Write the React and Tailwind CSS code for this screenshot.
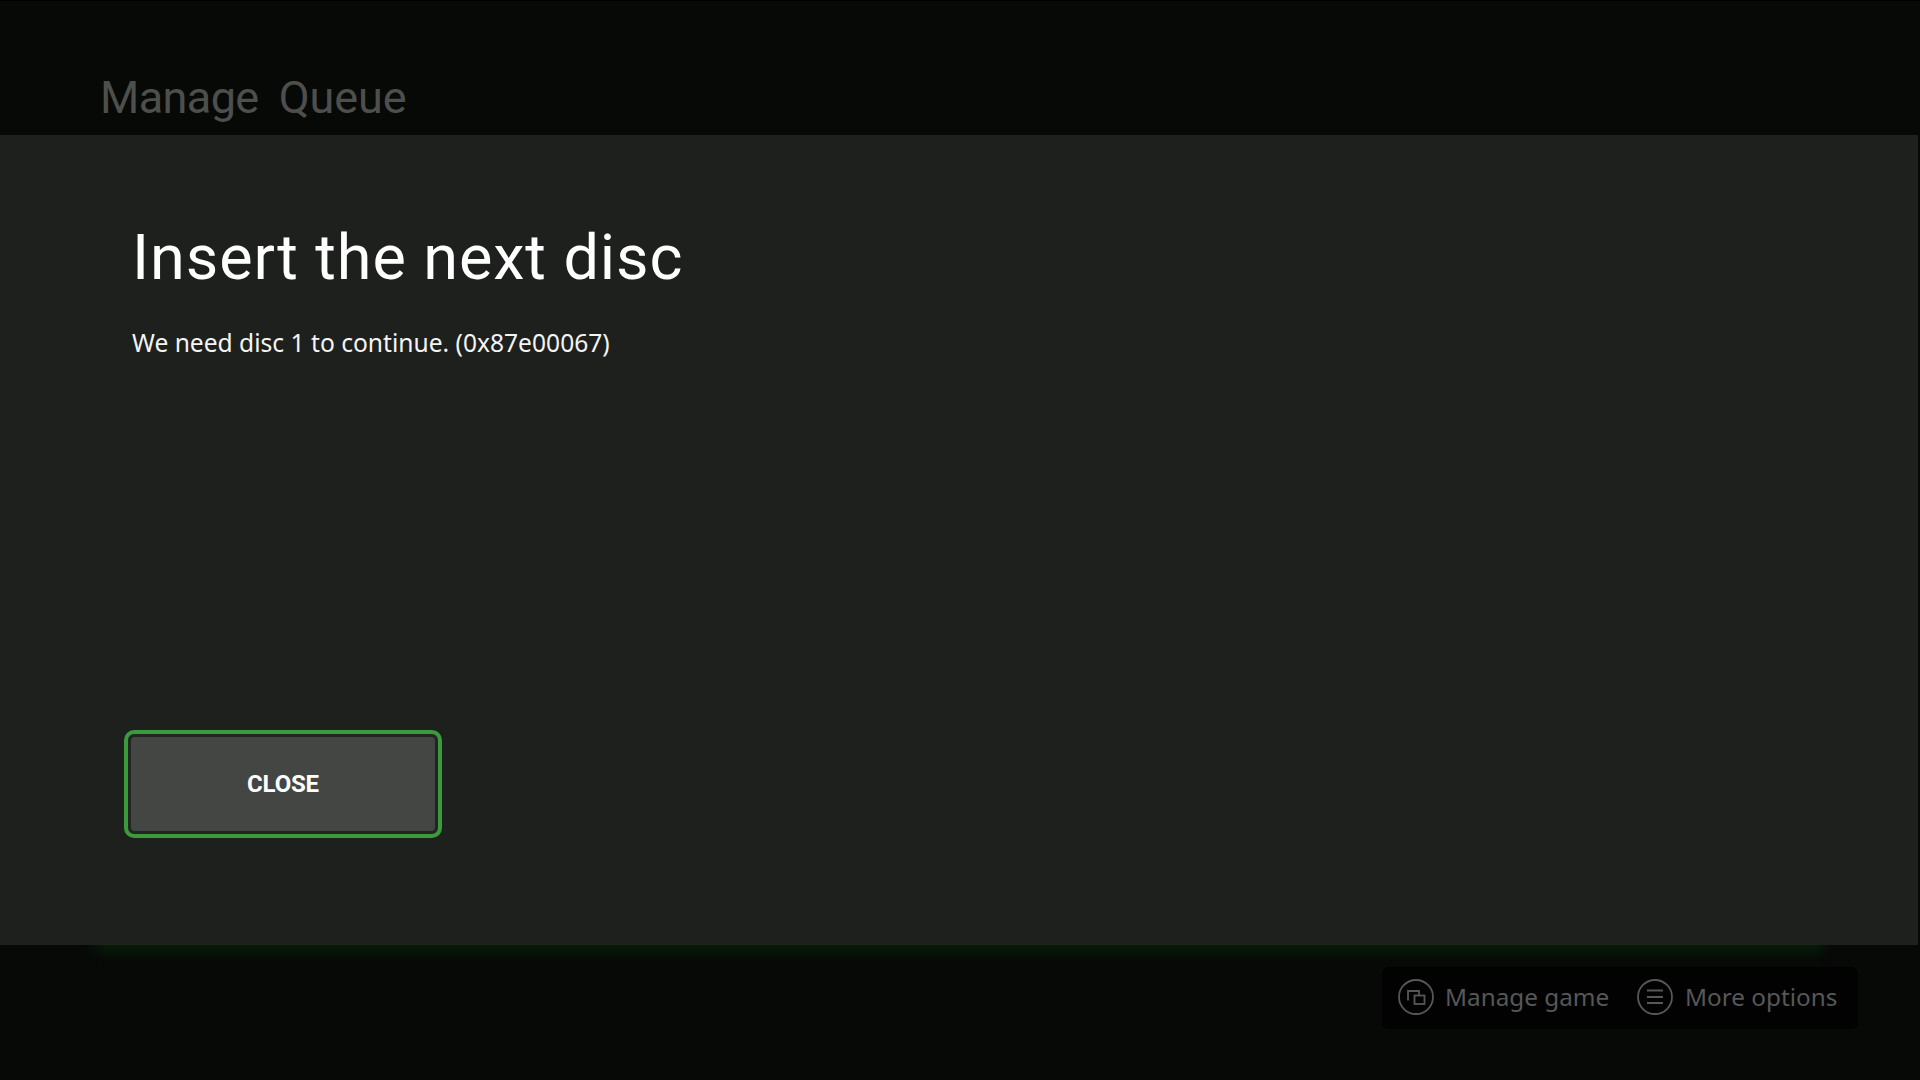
import React from 'react';

function ManageIcon() {
  return (
    <svg width="36" height="36" viewBox="0 0 36 36" fill="none" stroke="#565856" strokeWidth="1.8" className="shrink-0">
      <circle cx="18" cy="18" r="17" />
      <path d="M10 21.5V12h11v4" />
      <rect x="16.5" y="16.5" width="10" height="8.5" />
    </svg>
  );
}

function MenuIcon() {
  return (
    <svg width="36" height="36" viewBox="0 0 36 36" fill="none" stroke="#565856" strokeWidth="1.8" className="shrink-0">
      <circle cx="18" cy="18" r="17" />
      <path d="M10 11.5h16M10 18h16M10 24h16" strokeWidth="2.2" />
    </svg>
  );
}

export default function App() {
  return (
    <div className="h-screen w-full overflow-hidden flex flex-col bg-[#070907] font-['Noto_Sans',sans-serif]">
      {/* Header */}
      <div className="h-[135px] shrink-0 border-t border-black pl-[100px] pt-[69px]">
        <div className="flex gap-[20px] font-['Roboto',sans-serif] text-[45px] leading-[56px] text-[#4d4f4d]">
          <span className="tracking-[-0.6px]">Manage</span>
          <span className="tracking-[-0.1px]">Queue</span>
        </div>
      </div>

      {/* Panel */}
      <div className="flex-1 mr-[2px] bg-[#1e201e] pl-[132px] pt-[83px]">
        <h1 className="font-['Roboto',sans-serif] font-normal text-[63px] leading-[80px] tracking-[0.9px] text-white">Insert the next disc</h1>
        <p className="mt-[28px] text-[24.6px] leading-[34px] text-[#f4f4f4]">We need disc 1 to continue. (0x87e00067)</p>
        <div className="mt-[370px] -ml-[8px] w-[318px] h-[108px] rounded-[10px] border-[4px] border-[#3a9a3c] bg-[#232523] p-[3px]">
          <button className="w-full h-full rounded-[4px] bg-[#444644] font-['Roboto',sans-serif] font-bold text-[24px] tracking-[-0.2px] text-white">CLOSE</button>
        </div>
      </div>

      {/* Footer */}
      <div className="h-[135px] shrink-0">
        <div className="h-[22px] ml-[85px] mr-[90px] bg-gradient-to-b from-[#051c05] to-[#070907] to-70% [mask-image:linear-gradient(to_right,transparent,black_20px,black_calc(100%-13px),transparent)]"></div>
        <div className="flex justify-end pr-[62px]">
          <div className="h-[62px] w-[476px] rounded-[6px] bg-[#020202] flex items-center pl-[16px] pb-[2px] text-[24.3px] text-[#565856]">
            <ManageIcon />
            <span className="ml-[11px] w-[192px]">Manage game</span>
            <MenuIcon />
            <span className="ml-[12px]">More options</span>
          </div>
        </div>
      </div>
    </div>
  );
}
